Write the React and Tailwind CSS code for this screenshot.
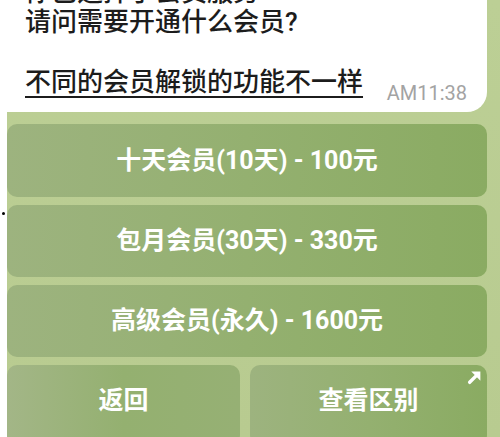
import React from "react";

const font = { fontFamily: 'Roboto, "Noto Sans CJK SC", "Noto Sans", sans-serif' };

function Btn({ children, className = "" }) {
  return (
    <div
      className={
        "relative shrink-0 flex items-center justify-center rounded-[10px] bg-gradient-to-r from-[#9db37f] via-[#94b070] to-[#8aab62] text-white font-bold text-[25px] " +
        className
      }
    >
      {children}
    </div>
  );
}

export default function App() {
  return (
    <div
      className="relative flex w-[500px] h-[437px] overflow-hidden bg-gradient-to-b from-[#bccf95] to-[#b8cb90]"
      style={font}
    >
      <div className="w-[7px] shrink-0 bg-white" />
      <div className="absolute left-[2px] top-[212px] w-[3px] h-[3px] rounded-full bg-black" />
      <div className="flex flex-col w-[480px] shrink-0">
        <div className="shrink-0 bg-white rounded-br-[20px] pl-[18px] pr-[20px] h-[112px] overflow-hidden">
          <div className="-mt-[23px] text-[26px] leading-[30px] font-medium text-[#1c1c1c]">
            <div>你已选择了会员服务</div>
            <div>请问需要开通什么会员?</div>
            <div>&nbsp;</div>
            <div className="flex items-baseline justify-between">
              <span className="underline underline-offset-[5px] decoration-[1.5px]">
                不同的会员解锁的功能不一样
              </span>
              <span className="text-[20px] font-normal text-[#a3a3a3] relative top-[9px]">AM11:38</span>
            </div>
          </div>
        </div>
        <div className="shrink-0 flex flex-col gap-[8px] mt-[12px]">
          <Btn className="h-[73px]">十天会员(10天) - 100元</Btn>
          <Btn className="h-[72px]">包月会员(30天) - 330元</Btn>
          <Btn className="h-[72px]">高级会员(永久) - 1600元</Btn>
          <div className="shrink-0 grid grid-cols-[233px_237px] gap-[10px]">
            <Btn className="h-[80px] pb-[8px] from-[#a3b687] via-[#9db27f] to-[#96b074]">返回</Btn>
            <Btn className="h-[80px] pb-[8px]">
              查看区别
              <svg
                className="absolute right-[5px] top-[5px]"
                width="15"
                height="15"
                viewBox="0 0 14 14"
              >
                <path d="M2.5 11.5 L8.5 5.5" stroke="white" strokeWidth="3.2" strokeLinecap="round" />
                <path d="M4 1.5 L12.5 1.5 L12.5 10 Z" fill="white" />
              </svg>
            </Btn>
          </div>
        </div>
      </div>
    </div>
  );
}
